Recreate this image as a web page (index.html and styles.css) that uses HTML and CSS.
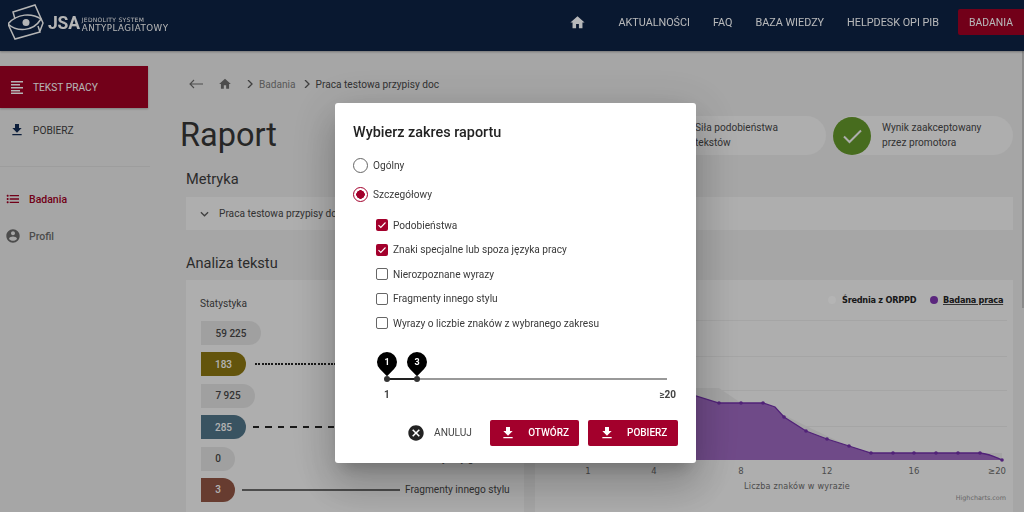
FILE: index.html
```html
<!DOCTYPE html>
<html lang="pl">
<head>
<meta charset="utf-8">
<title>Raport</title>
<link rel="stylesheet" href="styles.css">
</head>
<body>
<div class="page">
  <header class="topbar">
    <div class="brand">
      <svg class="brand-mark" viewBox="0 0 36 36" width="36" height="36" fill="none" stroke="#f2f2f2" stroke-width="1.500">
        <path d="M7 15 5 8 27 1l8 18-3 8"/>
        <path d="M0 20l7 15 25-7-2-6"/>
        <path d="M0 20C9 9 24 9 33 15 25 28 9 28 0 20z"/>
        <circle cx="18" cy="18.500" r="3.500" fill="#f2f2f2" stroke="none"/>
      </svg>
      <span class="brand-short">JSA</span>
      <span class="brand-long"><small>JEDNOLITY SYSTEM</small><b>ANTYPLAGIATOWY</b></span>
    </div>
    <nav class="topnav">
      <svg class="nav-home" viewBox="0 0 24 24"><path d="M10 20v-6h4v6h5v-8h3L12 3 2 12h3v8z"/></svg>
      <a>AKTUALNOŚCI</a>
      <a>FAQ</a>
      <a>BAZA WIEDZY</a>
      <a>HELPDESK OPI PIB</a>
      <a class="nav-active">BADANIA</a>
    </nav>
  </header>

  <div class="body-row">
    <aside class="sidebar">
      <div class="side-action side-action-on">
        <svg viewBox="0 0 14 14" width="14" height="14"><path d="M1 1h12v1.500H1zM1 4h9v1.500H1zM1 7h12v1.500H1zM1 10h9v1.500H1zM1 12.500h12V14H1z"/></svg>
        <span>TEKST PRACY</span>
      </div>
      <div class="side-action">
        <svg viewBox="0 0 24 24" width="16" height="16"><path d="M19 9h-4V3H9v6H5l7 7zM5 18v2h14v-2z"/></svg>
        <span>POBIERZ</span>
      </div>
      <hr class="side-rule">
      <div class="side-link side-link-on">
        <svg viewBox="0 0 24 24" width="16" height="16"><path d="M4 10.500c-.8 0-1.500.7-1.500 1.500s.7 1.500 1.500 1.500 1.500-.7 1.500-1.500-.7-1.500-1.500-1.500zm0-5c-.8 0-1.500.7-1.500 1.500S3.200 8.500 4 8.500 5.500 7.800 5.500 7 4.800 5.500 4 5.500zm0 10c-.8 0-1.500.7-1.500 1.500s.7 1.500 1.500 1.500 1.500-.7 1.500-1.500-.7-1.500-1.500-1.500zM7 18h14v-2H7zm0-5h14v-2H7zm0-7v2h14V6z"/></svg>
        <span>Badania</span>
      </div>
      <div class="side-link">
        <svg viewBox="0 0 24 24" width="16" height="16"><path d="M12 2C6.480 2 2 6.480 2 12s4.480 10 10 10 10-4.480 10-10S17.520 2 12 2zm0 3c1.660 0 3 1.340 3 3s-1.340 3-3 3-3-1.340-3-3 1.340-3 3-3zm0 14.200c-2.500 0-4.710-1.280-6-3.220.03-1.990 4-3.080 6-3.080s5.970 1.090 6 3.080c-1.290 1.940-3.500 3.220-6 3.220z"/></svg>
        <span>Profil</span>
      </div>
    </aside>

    <main class="content">
      <div class="crumbs">
        <svg class="crumb-back" viewBox="0 0 14 10" width="14" height="10" fill="none" stroke="#666" stroke-width="1.100"><path d="M14 5H1M5 1 1 5l4 4"/></svg>
        <svg class="crumb-home" viewBox="0 0 24 24" width="14" height="14"><path d="M10 20v-6h4v6h5v-8h3L12 3 2 12h3v8z"/></svg>
        <svg class="crumb-sep crumb-sep-a" viewBox="0 0 6 8" width="6" height="8"><path d="M1 0 5 4 1 8" fill="none" stroke="#555" stroke-width="1.300"/></svg>
        <span class="crumb-link">Badania</span>
        <svg class="crumb-sep" viewBox="0 0 6 8" width="6" height="8"><path d="M1 0 5 4 1 8" fill="none" stroke="#555" stroke-width="1.300"/></svg>
        <span class="crumb-now">Praca testowa przypisy doc</span>
      </div>

      <div class="title-row">
        <h1>Raport</h1>
        <div class="badges">
          <div class="badge badge-wide"><span>Siła podobieństwa<br>tekstów</span></div>
          <div class="badge-ok">
            <svg class="ok-icon" viewBox="0 0 38 38" width="38" height="38"><circle cx="19" cy="19" r="19" fill="#5f9028"/><path d="M11 19.500l5.500 5.500L28 13.500" fill="none" stroke="#e8e8e8" stroke-width="2"/></svg>
            <span>Wynik zaakceptowany<br>przez promotora</span>
          </div>
        </div>
      </div>

      <h2 class="h-metric">Metryka</h2>
      <div class="card metric">
        <svg viewBox="0 0 10 6" width="9" height="6"><path d="M1 1l4 4 4-4" fill="none" stroke="#555" stroke-width="1.400"/></svg>
        <span>Praca testowa przypisy doc</span>
      </div>

      <h2 class="h-analysis">Analiza tekstu</h2>
      <div class="analysis">
        <section class="card stats">
          <div class="stats-title">Statystyka</div>
          <div class="stat"><b class="pill w60">59 225</b></div>
          <div class="stat"><b class="pill w45 olive">183</b><i class="line dotted"></i></div>
          <div class="stat"><b class="pill w54">7 925</b></div>
          <div class="stat"><b class="pill w45 slate">285</b><i class="line dashed"></i></div>
          <div class="stat"><b class="pill w34">0</b><span class="stat-hidden">Wyrazy graniczne</span></div>
          <div class="stat"><b class="pill w34 brown">3</b><i class="line solid"></i><span class="stat-label">Fragmenty innego stylu</span></div>
        </section>
        <section class="card chart">
          <svg viewBox="0 0 478 232" width="478" height="232">
            <g stroke="#dcdcdc" stroke-width="1">
              <path d="M12 40.500H472M12 76.500H472M12 110.500H472M12 146.500H472"/>
            </g>
            <path class="ch-avg" d="M54 180V150L120 125 161 108H184L206 123H228L249 135 271 146 292 156 314 166 336 173H467V180z"/>
            <path class="ch-area" d="M54 180V165L120 128 161 116 184 123H206L228 123 240 127 249 137 271 151 292 159 314 166 336 173H445C455 174 460 177 467 180z"/>
            <path class="ch-line" d="M54 165 120 128 161 116 184 123H206L228 123 240 127 249 137 271 151 292 159 314 166 336 173H445C455 174 460 177 467 180"/>
            <g class="ch-dots">
              <circle cx="184" cy="123" r="1.800"/><circle cx="206" cy="123" r="1.800"/><circle cx="228" cy="123" r="1.800"/><circle cx="249" cy="137" r="1.800"/><circle cx="271" cy="151" r="1.800"/><circle cx="292" cy="159" r="1.800"/><circle cx="314" cy="166" r="1.800"/><circle cx="336" cy="173" r="1.800"/><circle cx="358" cy="173" r="1.800"/><circle cx="379" cy="173" r="1.800"/><circle cx="401" cy="173" r="1.800"/><circle cx="423" cy="173" r="1.800"/><circle cx="445" cy="173" r="1.800"/><circle cx="467" cy="180" r="1.800"/>
            </g>
            <circle cx="297" cy="20" r="4" fill="#f0f0f0"/>
            <text class="ch-legend" x="307" y="23">Średnia z ORPPD</text>
            <circle cx="399" cy="20" r="4" fill="#7a35a8"/>
            <text class="ch-legend ch-under" x="408" y="23">Badana praca</text>
            <text class="ch-tick" x="53" y="194" text-anchor="middle">1</text>
            <text class="ch-tick" x="119" y="194" text-anchor="middle">4</text>
            <text class="ch-tick" x="206" y="194" text-anchor="middle">8</text>
            <text class="ch-tick" x="292" y="194" text-anchor="middle">12</text>
            <text class="ch-tick" x="379" y="194" text-anchor="middle">16</text>
            <text class="ch-tick" x="471" y="194" text-anchor="end">≥20</text>
            <text class="ch-axis" x="262" y="208.500" text-anchor="middle">Liczba znaków w wyrazie</text>
            <text class="ch-credit" x="471" y="219.500" text-anchor="end">Highcharts.com</text>
          </svg>
        </section>
      </div>
    </main>
  </div>
</div>

<div class="scroll-thumb"></div>
<div class="backdrop"></div>

<div class="dialog">
  <h3>Wybierz zakres raportu</h3>
  <label class="radio-row"><i class="radio"></i><span>Ogólny</span></label>
  <label class="radio-row radio-row-b"><i class="radio radio-on"></i><span>Szczegółowy</span></label>
  <div class="checks">
    <label class="check-row"><i class="check check-on"><svg viewBox="0 0 12 12" width="12" height="12"><path d="M2.500 6.200l2.300 2.300 4.700-5" fill="none" stroke="#fff" stroke-width="1.100"/></svg></i><span>Podobieństwa</span></label>
    <label class="check-row"><i class="check check-on"><svg viewBox="0 0 12 12" width="12" height="12"><path d="M2.500 6.200l2.300 2.300 4.700-5" fill="none" stroke="#fff" stroke-width="1.100"/></svg></i><span>Znaki specjalne lub spoza języka pracy</span></label>
    <label class="check-row"><i class="check"></i><span>Nierozpoznane wyrazy</span></label>
    <label class="check-row"><i class="check"></i><span>Fragmenty innego stylu</span></label>
    <label class="check-row"><i class="check"></i><span>Wyrazy o liczbie znaków z wybranego zakresu</span></label>
  </div>
  <div class="slider">
    <div class="track"><div class="track-on"></div></div>
    <div class="pin pin-a"><span>1</span></div>
    <div class="pin pin-b"><span>3</span></div>
    <div class="dot dot-a"></div>
    <div class="dot dot-b"></div>
  </div>
  <div class="slider-labels"><span>1</span><span>≥20</span></div>
  <div class="actions">
    <svg class="cancel-icon" viewBox="0 0 24 24" width="16" height="16"><path d="M12 2C6.470 2 2 6.470 2 12s4.470 10 10 10 10-4.470 10-10S17.530 2 12 2zm5 13.590L15.590 17 12 13.410 8.410 17 7 15.590 10.590 12 7 8.410 8.410 7 12 10.590 15.590 7 17 8.410 13.410 12z" transform="translate(-1.800 -1.800) scale(1.150)"/></svg>
    <span class="cancel">ANULUJ</span>
    <button class="btn btn-open"><svg viewBox="0 0 24 24" width="16" height="16"><path d="M19 9h-4V3H9v6H5l7 7zM5 18v2h14v-2z"/></svg><span>OTWÓRZ</span></button>
    <button class="btn btn-save"><svg viewBox="0 0 24 24" width="16" height="16"><path d="M19 9h-4V3H9v6H5l7 7zM5 18v2h14v-2z"/></svg><span>POBIERZ</span></button>
  </div>
</div>
</body>
</html>
```
FILE: styles.css
```css
* { box-sizing: border-box; }
html, body { margin: 0; height: 512px; overflow: hidden; }
body { font-family: Roboto, "Liberation Sans", sans-serif; font-size: 10.150px; color: #3c3c3c; background: #dedede; }
svg { display: block; flex: none; }

.page { height: 512px; display: flex; flex-direction: column; overflow: hidden; }

.topbar { height: 51px; flex: none; background: #0c2040; display: flex; justify-content: space-between; box-shadow: 0 1px 2px rgba(0,0,0,.3); position: relative; z-index: 1; }
.brand { display: flex; align-items: flex-start; padding: 4px 0 0 8px; color: #f2f2f2; }
.brand-short { font-size: 17.500px; line-height: 20px; font-weight: 700; letter-spacing: -.2px; margin: 9px 0 0 4px; }
.brand-long { display: flex; flex-direction: column; margin: 12px 0 0 2px; line-height: 1; }
.brand-long small { font-size: 6px; line-height: 7px; letter-spacing: .3px; font-family: "DejaVu Sans", sans-serif; }
.brand-long b { font-size: 8.700px; line-height: 10px; font-weight: 400; letter-spacing: .5px; font-family: "DejaVu Sans", sans-serif; }
.topnav { display: flex; align-items: flex-start; gap: 23px; font-size: 10.800px; color: #f5f6f8; }
.topnav a { line-height: 14px; padding-top: 16px; }
.nav-home { fill: #f5f6f8; margin: 14px 9px 0 0; width: 17px; height: 17px; }
.topnav .nav-active { background: #980022; width: 66px; height: 26px; margin: 9px 0 0 -4px; padding: 7px 0 0; text-align: center; border-radius: 2px 0 0 2px; font-size: 10.400px; }

.body-row { flex: 1; display: flex; min-height: 0; }

.sidebar { width: 186px; flex: none; padding-top: 15px; }
.side-action { width: 148px; height: 42px; display: flex; align-items: center; gap: 9px; padding-left: 10px; font-size: 10.200px; }
.side-action svg { fill: #11294f; }
.side-action-on { background: #980022; color: #f2f2f2; box-shadow: 0 1px 2px rgba(0,0,0,.25); margin-bottom: 1px; }
.side-action-on svg { fill: #f2f2f2; }
.side-action:not(.side-action-on) { gap: 8px; padding-left: 9px; }
.side-rule { border: 0; border-top: 1px solid #d2d2d2; margin: 15px 36px 0 0; width: 150px; }
.side-link { display: flex; align-items: center; gap: 8px; padding-left: 5px; font-size: 10.500px; font-weight: 500; color: #666; height: 16px; margin-bottom: 21px; }
.side-link svg { fill: #666; }
.side-rule + .side-link { margin-top: 24px; }
.side-link-on { color: #980022; }
.side-link-on svg { fill: #980022; }

.content { flex: 1; min-width: 0; padding-right: 11px; }
.crumbs { display: flex; align-items: center; height: 14px; margin-top: 26px; margin-left: 3px; color: #767676; }
.crumb-home { fill: #666; margin-left: 15px; }
.crumb-sep { margin: 0 6px 0 8px; }
.crumb-sep-a { margin: 0 6px 0 15px; }
.crumb-now { color: #444; }

.title-row { display: flex; justify-content: space-between; height: 39px; margin-top: 25px; }
h1 { margin: 0; font-size: 32.500px; font-weight: 400; line-height: 39px; color: #333; margin-left: -6px; }
.badges { display: flex; gap: 7px; }
.badge { width: 180px; height: 39px; border-radius: 20px; background: #e8e8e8; display: flex; align-items: center; justify-content: flex-end; line-height: 15px; color: #444; }
.badge span { width: 131px; padding-bottom: 2px; }
.badge-ok { width: 180px; height: 39px; border-radius: 20px; background: #e8e8e8; display: flex; align-items: center; line-height: 15px; color: #444; }
.badge-ok span { padding-bottom: 2px; }
.ok-icon { margin-right: 11px; }

h2 { margin: 0; font-weight: 400; font-size: 14.600px; line-height: 20px; color: #3a3a3a; }
.h-metric { margin-top: 14px; }
.card { background: #e8e8e8; }
.metric { height: 33px; margin-top: 8px; display: flex; align-items: center; gap: 10px; padding-left: 14px; color: #444; }
.metric span { white-space: nowrap; }
.h-analysis { margin-top: 23px; }

.analysis { display: flex; gap: 11px; margin-top: 7px; height: 240px; }
.stats { width: 338px; padding: 17px 0 0 15px; }
.stats-title { line-height: 14px; color: #444; margin: 0 0 10px -1px; }
.stat { display: flex; align-items: center; height: 24px; margin-bottom: 7.400px; }
.pill { display: flex; align-items: center; justify-content: center; height: 24px; border-radius: 0 12px 12px 0; background: #d6d6d6; font-size: 10px; font-weight: 500; color: #444; flex: none; }
.w60 { width: 60px; } .w54 { width: 54px; } .w45 { width: 45px; } .w34 { width: 34px; }
.olive { background: #857010; color: #eee; }
.slate { background: #4d6f82; color: #eee; }
.brown { background: #8a5040; color: #eee; }
.line { display: block; flex: none; height: 2px; }
.dotted { width: 220px; margin-left: 9px; background: repeating-linear-gradient(90deg, #222 0 2px, transparent 2px 3.300px); }
.dashed { width: 220px; margin-left: 7px; background: repeating-linear-gradient(90deg, #222 0 6.500px, transparent 6.500px 12.500px); }
.solid { width: 158px; margin-left: 7px; background: #666; }
.stat-label { margin-left: 5px; color: #444; white-space: nowrap; }
.stat-hidden { margin-left: 198px; color: #444; white-space: nowrap; }

.chart { width: 478px; padding: 0; }
.ch-avg { fill: #dcdcdc; }
.ch-area { fill: #7a35a8; fill-opacity: .72; }
.ch-line { fill: none; stroke: #6c2ea0; stroke-width: 1.300; }
.ch-dots { fill: #6c2ea0; }
.ch-legend { font-family: "DejaVu Sans", sans-serif; font-size: 8.200px; font-weight: 700; letter-spacing: -.25px; fill: #222; }
.ch-under { text-decoration: underline; }
.ch-tick { font-family: "DejaVu Sans", sans-serif; font-size: 8.500px; fill: #666; }
.ch-axis { font-family: "DejaVu Sans", sans-serif; font-size: 8.100px; letter-spacing: .2px; fill: #666; }
.ch-credit { font-family: "DejaVu Sans", sans-serif; font-size: 6.400px; fill: #888; }

.scroll-thumb { position: fixed; top: 51px; right: 0; width: 2px; height: 257px; background: #b8b8b8; }
.backdrop { position: fixed; inset: 0; background: rgba(0,0,0,.25); z-index: 2; }

.dialog { position: fixed; z-index: 3; left: 335px; top: 103px; width: 361px; height: 360px; background: #fff; border-radius: 3px; padding: 21px 18px 0; box-shadow: 0 11px 15px -7px rgba(0,0,0,.2), 0 24px 38px 3px rgba(0,0,0,.14), 0 9px 46px 8px rgba(0,0,0,.12); color: #3a3a3a; }
.dialog h3 { margin: 0; font-size: 14.400px; line-height: 18px; font-weight: 500; color: #222; }
.radio-row { display: flex; align-items: center; gap: 5px; height: 16px; margin-top: 15px; }
.radio-row-b { margin-top: 13px; }
.radio { width: 15px; height: 15px; border: 1.500px solid #666; border-radius: 50%; flex: none; display: block; }
.radio-on { border-color: #a3002c; background: radial-gradient(circle, #a3002c 0 4px, #fff 4.500px); }
.checks { padding-left: 23px; margin-top: 11px; }
.check-row { display: flex; align-items: center; gap: 5px; height: 24.500px; }
.check { width: 12px; height: 12px; border: 1.300px solid #666; border-radius: 2px; flex: none; display: block; }
.check-on { border: 0; background: #a3002c; }

.slider { position: relative; height: 2px; margin: 42px 10px 0 34px; width: 280px; }
.track { height: 2px; background: #999; }
.track-on { height: 2px; width: 30px; background: #222; }
.dot { position: absolute; top: -2px; width: 6px; height: 6px; border-radius: 50%; background: #333; }
.dot-a { left: -3px; } .dot-b { left: 27px; }
.pin { position: absolute; top: -26px; width: 20px; height: 20px; background: #000; border-radius: 50% 50% 50% 0; transform: rotate(-45deg); }
.pin-a { left: -10px; } .pin-b { left: 20px; }
.pin span { display: block; transform: rotate(45deg); color: #fff; font-size: 9px; font-weight: 700; line-height: 20px; text-align: center; }
.slider-labels { display: flex; justify-content: space-between; margin: 9px 2px 0 31px; font-size: 10px; font-weight: 700; line-height: 12px; color: #444; }

.actions { display: flex; align-items: center; margin: 19px 0 0 55px; height: 26px; }
.cancel-icon { fill: #222; }
.cancel { margin-left: 10px; font-size: 10.200px; color: #444; width: 56px; }
.btn { display: flex; align-items: center; justify-content: center; gap: 12px; height: 26px; border: 0; padding: 0; border-radius: 2px; background: #a3002c; color: #fff; font: 500 10px Roboto, sans-serif; }
.btn svg { fill: #fff; }
.btn-open { width: 90px; margin-right: 9px; }
.btn-save { width: 90px; }
```
